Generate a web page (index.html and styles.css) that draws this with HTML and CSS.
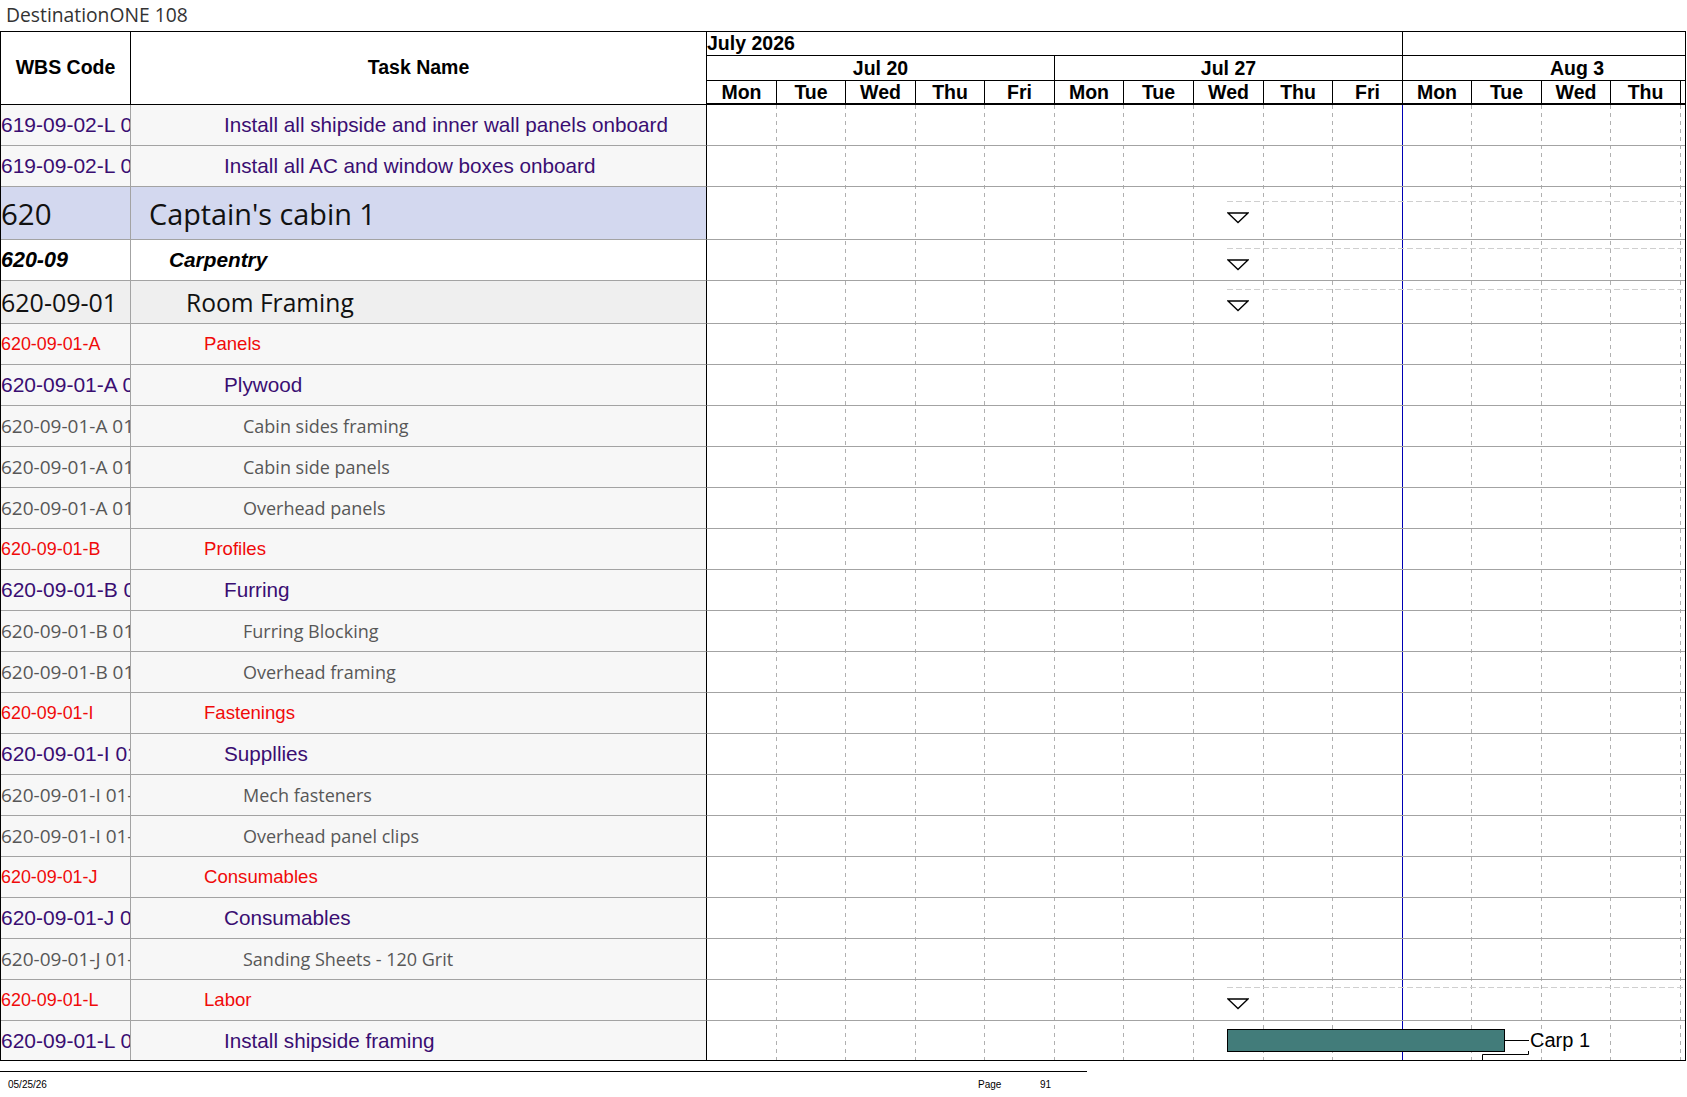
FILE: index.html
```html
<!DOCTYPE html>
<html>
<head>
<meta charset="utf-8">
<title>DestinationONE 108</title>
<link rel="stylesheet" href="styles.css">
</head>
<body>
<div class="title">DestinationONE 108</div>
<div class="sheet">
  <div class="hcell h-wbs">WBS Code</div>
  <div class="hcell h-task">Task Name</div>
  <div class="hcell h-month m1">July 2026</div>
  <div class="hcell h-month m2"></div>
  <div class="hcell h-week w1">Jul 20</div>
  <div class="hcell h-week w2">Jul 27</div>
  <div class="hcell h-week w3"><span class="wk-inner">Aug 3</span></div>
  <div class="hcell h-day">Mon</div>
  <div class="hcell h-day">Tue</div>
  <div class="hcell h-day">Wed</div>
  <div class="hcell h-day">Thu</div>
  <div class="hcell h-day">Fri</div>
  <div class="hcell h-day">Mon</div>
  <div class="hcell h-day">Tue</div>
  <div class="hcell h-day">Wed</div>
  <div class="hcell h-day">Thu</div>
  <div class="hcell h-day">Fri</div>
  <div class="hcell h-day">Mon</div>
  <div class="hcell h-day">Tue</div>
  <div class="hcell h-day">Wed</div>
  <div class="hcell h-day">Thu</div>
  <div class="hcell h-day h-tail"></div>

  <div class="lines">
    <div class="dl"></div><div class="dl"></div><div class="dl"></div><div class="dl"></div><div class="dl"></div>
    <div class="dl"></div><div class="dl"></div><div class="dl"></div><div class="dl"></div><div class="dl today"></div>
    <div class="dl"></div><div class="dl"></div><div class="dl"></div><div class="dl"></div>
  </div>

  <div class="body">
    <div class="wbs purple">619-09-02-L 01</div>
    <div class="task purple i4">Install all shipside and inner wall panels onboard</div>
    <div class="chart"></div>

    <div class="wbs purple">619-09-02-L 02</div>
    <div class="task purple i4">Install all AC and window boxes onboard</div>
    <div class="chart"></div>

    <div class="wbs lvl0">620</div>
    <div class="task lvl0 i0">Captain's cabin 1</div>
    <div class="chart sum sum-big"><div class="sumline"></div><svg class="tri" width="22" height="12" viewBox="0 0 22 12"><polygon points="1,1 21,1 11,10.5" fill="#fff" stroke="#000" stroke-width="1.3"/></svg></div>

    <div class="wbs lvl1">620-09</div>
    <div class="task lvl1 i1">Carpentry</div>
    <div class="chart sum"><div class="sumline"></div><svg class="tri" width="22" height="12" viewBox="0 0 22 12"><polygon points="1,1 21,1 11,10.5" fill="#fff" stroke="#000" stroke-width="1.3"/></svg></div>

    <div class="wbs lvl2">620-09-01</div>
    <div class="task lvl2 i2">Room Framing</div>
    <div class="chart sum"><div class="sumline"></div><svg class="tri" width="22" height="12" viewBox="0 0 22 12"><polygon points="1,1 21,1 11,10.5" fill="#fff" stroke="#000" stroke-width="1.3"/></svg></div>

    <div class="wbs red">620-09-01-A</div>
    <div class="task red i3">Panels</div>
    <div class="chart"></div>

    <div class="wbs purple">620-09-01-A 01</div>
    <div class="task purple i4">Plywood</div>
    <div class="chart"></div>

    <div class="wbs gray">620-09-01-A 01-01</div>
    <div class="task gray i5">Cabin sides framing</div>
    <div class="chart"></div>

    <div class="wbs gray">620-09-01-A 01-02</div>
    <div class="task gray i5">Cabin side panels</div>
    <div class="chart"></div>

    <div class="wbs gray">620-09-01-A 01-03</div>
    <div class="task gray i5">Overhead panels</div>
    <div class="chart"></div>

    <div class="wbs red">620-09-01-B</div>
    <div class="task red i3">Profiles</div>
    <div class="chart"></div>

    <div class="wbs purple">620-09-01-B 01</div>
    <div class="task purple i4">Furring</div>
    <div class="chart"></div>

    <div class="wbs gray">620-09-01-B 01-01</div>
    <div class="task gray i5">Furring Blocking</div>
    <div class="chart"></div>

    <div class="wbs gray">620-09-01-B 01-02</div>
    <div class="task gray i5">Overhead framing</div>
    <div class="chart"></div>

    <div class="wbs red">620-09-01-I</div>
    <div class="task red i3">Fastenings</div>
    <div class="chart"></div>

    <div class="wbs purple">620-09-01-I 01</div>
    <div class="task purple i4">Suppllies</div>
    <div class="chart"></div>

    <div class="wbs gray">620-09-01-I 01-01</div>
    <div class="task gray i5">Mech fasteners</div>
    <div class="chart"></div>

    <div class="wbs gray">620-09-01-I 01-02</div>
    <div class="task gray i5">Overhead panel clips</div>
    <div class="chart"></div>

    <div class="wbs red">620-09-01-J</div>
    <div class="task red i3">Consumables</div>
    <div class="chart"></div>

    <div class="wbs purple">620-09-01-J 01</div>
    <div class="task purple i4">Consumables</div>
    <div class="chart"></div>

    <div class="wbs gray">620-09-01-J 01-01</div>
    <div class="task gray i5">Sanding Sheets - 120 Grit</div>
    <div class="chart"></div>

    <div class="wbs red">620-09-01-L</div>
    <div class="task red i3">Labor</div>
    <div class="chart sum sum-labor"><div class="sumline"></div><svg class="tri" width="22" height="12" viewBox="0 0 22 12"><polygon points="1,1 21,1 11,10.5" fill="#fff" stroke="#000" stroke-width="1.3"/></svg></div>

    <div class="wbs purple last">620-09-01-L 01</div>
    <div class="task purple i4 last">Install shipside framing</div>
    <div class="chart bar-row last">
      <div class="bar"></div>
      <div class="lead"></div>
      <div class="bar-label">Carp 1</div>
      <svg class="bracket" width="48" height="9" viewBox="0 0 48 9"><path d="M0.5 9 V3.5 H46.5 V0" fill="none" stroke="#000" stroke-width="1"/></svg>
    </div>
  </div>
</div>
<div class="footer">
  <span class="f-date">05/25/26</span>
  <span class="f-page">Page</span>
  <span class="f-num">91</span>
</div>
</body>
</html>
```
FILE: styles.css
```css
* { box-sizing: border-box; }

body {
  margin: 0;
  background: #fff;
  font-family: "Liberation Sans", Arial, sans-serif;
  color: #000;
}

.title {
  height: 31px;
  padding-left: 6px;
  font-family: "Open Sans", sans-serif;
  font-size: 19.3px;
  line-height: 29px;
  color: #333;
}

.sheet {
  display: grid;
  width: 1686px;
  border: 1px solid #000;
  grid-template-columns: 130px 576px 70px 69px 70px 69px 70px 69px 70px 70px 69px 70px 69px 70px 69px 70px 4px;
  grid-template-rows: 24px 25px 24px auto;
}

.hcell {
  display: flex;
  align-items: center;
  justify-content: center;
  font-weight: bold;
  font-size: 19.5px;
  white-space: nowrap;
  overflow: hidden;
}

.h-wbs { grid-column: 1; grid-row: 1 / 4; border-right: 1px solid #000; border-bottom: 1px solid #000; padding-bottom: 2px; }
.h-task { grid-column: 2; grid-row: 1 / 4; border-right: 1px solid #000; border-bottom: 1px solid #000; padding-bottom: 2px; }

.h-month { grid-row: 1; border-bottom: 1px solid #000; justify-content: flex-start; }
.m1 { grid-column: 3 / span 10; border-right: 1px solid #000; }
.m2 { grid-column: 13 / -1; }

.h-week { grid-row: 2; border-bottom: 1px solid #000; }
.w1 { grid-column: 3 / span 5; border-right: 1px solid #000; }
.w2 { grid-column: 8 / span 5; border-right: 1px solid #000; }
.w3 { grid-column: 13 / -1; justify-content: flex-start; }
.wk-inner { flex: 0 0 348px; text-align: center; }

.h-day { grid-row: 3; border-right: 1px solid #000; border-bottom: 2px solid #000; padding-top: 1px; }
.h-tail { border-right: none; }

.lines {
  grid-column: 3 / -1;
  grid-row: 4;
  display: grid;
  grid-template-columns: 70px 69px 70px 69px 70px 69px 70px 70px 69px 70px 69px 70px 69px 70px 4px;
}

.dl {
  background-image: repeating-linear-gradient(to bottom, #b0b0b0 0 4px, transparent 4px 8px);
  background-size: 1px 100%;
  background-position: right top;
  background-repeat: no-repeat;
}

.dl.today {
  background: none;
  border-right: 1px solid #0000b4;
}

.body {
  grid-column: 1 / -1;
  grid-row: 4;
  display: grid;
  grid-template-columns: 130px 576px 1fr;
  grid-template-rows: 41px 41px 53px 41px 43px repeat(17, 41px) 39px;
}

.wbs, .task {
  display: flex;
  align-items: center;
  white-space: nowrap;
  overflow: hidden;
  background: #f7f7f7;
  border-bottom: 1px solid #a3a3a3;
}

.wbs { border-right: 1px solid #a3a3a3; padding-left: 0; }
.task { border-right: 1px solid #000; }

.chart {
  position: relative;
  border-bottom: 1px solid #a3a3a3;
}

.last { border-bottom: none; }

.purple { color: #3a0e72; font-size: 20.7px; }
.wbs.purple { font-size: 21px; }
.red { color: #f00a0a; font-size: 18.6px; }
.wbs.red { font-size: 17.9px; }
.gray { color: #575757; font-family: "Open Sans", sans-serif; font-size: 18px; }
.wbs.gray { font-size: 19px; }

.lvl0 {
  background: #d3d8ef;
  font-family: "Open Sans", sans-serif;
  font-size: 28.8px;
  color: #111;
}

.wbs.lvl0 { font-size: 29.5px; }

.lvl1 {
  background: #fff;
  font-weight: bold;
  font-style: italic;
  font-size: 20.8px;
}

.wbs.lvl1 { font-size: 21.5px; }

.lvl2 {
  background: #efefef;
  font-family: "Open Sans", sans-serif;
  font-size: 24.6px;
  color: #111;
}

.wbs.lvl2 { font-size: 25px; }

.i0 { padding-left: 18px; }
.i1 { padding-left: 38px; }
.i2 { padding-left: 55px; }
.i3 { padding-left: 73px; }
.i4 { padding-left: 93px; }
.i5 { padding-left: 112px; }

.sum {
  display: flex;
  flex-direction: column;
  align-items: flex-start;
  padding: 8px 0 0 520px;
}

.sum-big { padding-top: 14px; }
.sum-labor { padding-top: 7px; }

.sumline {
  align-self: stretch;
  height: 1px;
  background-image: repeating-linear-gradient(to right, #cfcfcf 0 6px, transparent 6px 9px);
}

.tri { display: block; margin-top: 10px; }

.bar-row {
  display: flex;
  align-items: flex-start;
  padding: 8px 0 0 520px;
}

.bar {
  width: 278px;
  height: 23px;
  background: #427c7a;
  border: 1px solid #000;
}

.lead {
  width: 24px;
  height: 1px;
  margin-top: 11px;
  background: #000;
}

.bar-label {
  font-size: 20px;
  line-height: 23px;
  padding-left: 1px;
}

.bracket {
  position: absolute;
  left: 775px;
  top: 30px;
}

.footer {
  width: 1087px;
  margin-top: 10px;
  border-top: 1px solid #000;
  display: flex;
  font-size: 10px;
  height: 26px;
  align-items: center;
}

.f-date { margin-left: 8px; width: 970px; }
.f-page { width: 62px; }
```
